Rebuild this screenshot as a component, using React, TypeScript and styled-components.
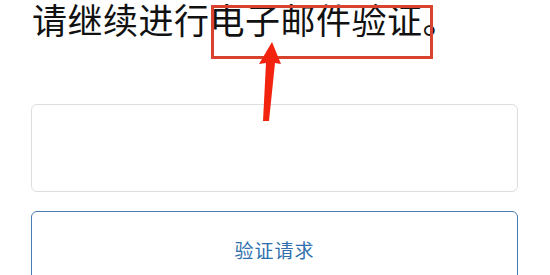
import styled, { createGlobalStyle } from "styled-components";

const GlobalStyle = createGlobalStyle`
  html, body {
    margin: 0;
    padding: 0;
    background: #ffffff;
    overflow: hidden;
  }
  body {
    font-family: "Noto Sans CJK SC", "Noto Sans", sans-serif;
  }
`;

const Page = styled.main`
  position: relative;
  width: 550px;
  height: 275px;
  box-sizing: border-box;
  padding: 0 32px 0 31px;
  display: flex;
  flex-direction: column;
  overflow: hidden;
`;

const Title = styled.h1`
  margin: 0 0 0 1px;
  padding-top: 1px;
  font-size: 35px;
  line-height: 35px;
  font-weight: 400;
  letter-spacing: 0.5px;
  color: #111111;
  white-space: nowrap;
  flex-shrink: 0;
`;

const Field = styled.div`
  flex-shrink: 0;
  margin-top: 68px;
  height: 88px;
  box-sizing: border-box;
  border: 1px solid #dedede;
  border-radius: 6px;
  background: #ffffff;
`;

const Button = styled.button`
  flex-shrink: 0;
  margin-top: 19px;
  height: 76px;
  box-sizing: border-box;
  border: 1.5px solid #4a7bb2;
  border-radius: 6px;
  background: #ffffff;
  color: #2f6fae;
  font-family: "Noto Sans CJK SC", "Noto Sans", sans-serif;
  font-size: 19px;
  letter-spacing: 1px;
  padding: 0;
  cursor: pointer;
`;

const Highlight = styled.div`
  position: absolute;
  left: 211px;
  top: 5px;
  width: 222px;
  height: 54px;
  box-sizing: border-box;
  border: 3px solid #d8432f;
  pointer-events: none;
`;

const Arrow = styled.svg`
  position: absolute;
  left: 0;
  top: 0;
  pointer-events: none;
`;

function App() {
  return (
    <>
      <GlobalStyle />
      <Page>
        <Title>请继续进行电子邮件验证。</Title>
        <Field />
        <Button>验证请求</Button>
        <Highlight />
        <Arrow width="550" height="275" viewBox="0 0 550 275">
          <path d="M272 42 L281 64 L275 63 L269 121 L263 121 L266 63 L259 64 Z" fill="#f2230f" />
        </Arrow>
      </Page>
    </>
  );
}

export default App;
